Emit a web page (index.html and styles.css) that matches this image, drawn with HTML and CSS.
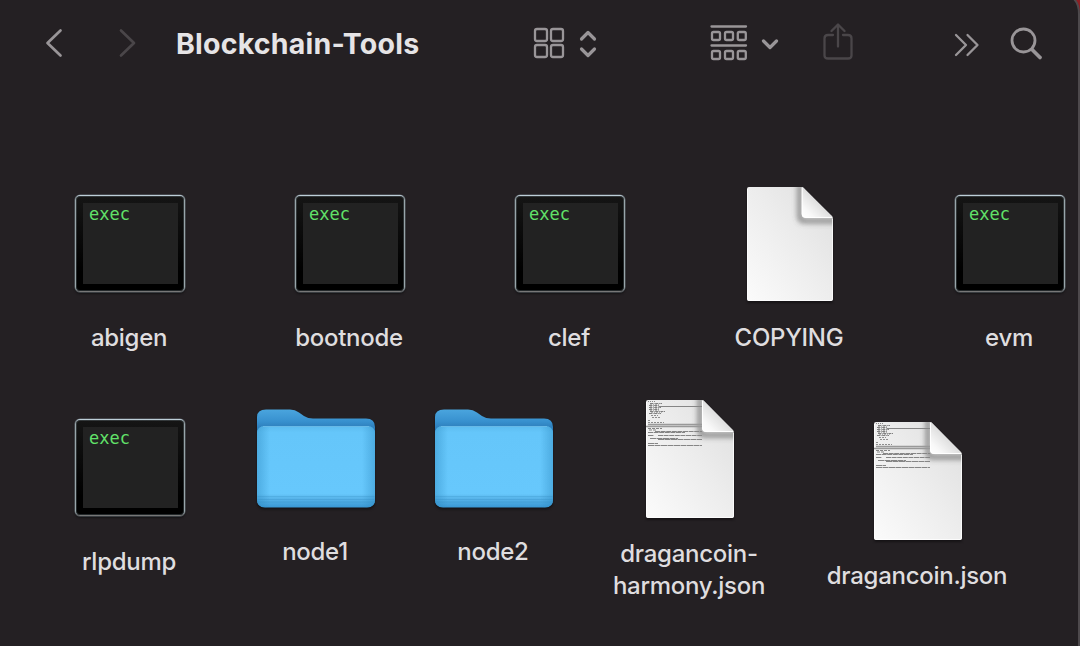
FILE: index.html
```html
<!DOCTYPE html>
<html lang="en">
<head>
<meta charset="utf-8">
<title>Blockchain-Tools</title>
<link rel="stylesheet" href="styles.css">
</head>
<body>
<svg class="defs" width="0" height="0" aria-hidden="true">
  <defs>
    <linearGradient id="paper" x1="1" y1="0" x2="0" y2="1"><stop offset="0" stop-color="#dedede"/><stop offset=".45" stop-color="#ececec"/><stop offset="1" stop-color="#fbfbfb"/></linearGradient>
    <linearGradient id="fold" x1="1" y1="0" x2="0" y2="1"><stop offset=".45" stop-color="#dcdcdc"/><stop offset=".8" stop-color="#f8f8f8"/><stop offset="1" stop-color="#fff"/></linearGradient>
    <linearGradient id="back" x1="0" y1="0" x2="0" y2="1"><stop offset="0" stop-color="#4aa5de"/><stop offset=".12" stop-color="#3891cf"/><stop offset=".2" stop-color="#2b7bb8"/><stop offset="1" stop-color="#2f87c5"/></linearGradient>
    <linearGradient id="front" x1="0" y1="0" x2="0" y2="1"><stop offset="0" stop-color="#5cbcef"/><stop offset=".08" stop-color="#65c6fa"/><stop offset=".83" stop-color="#67c8fc"/><stop offset=".88" stop-color="#5ab7ec"/><stop offset="1" stop-color="#3998d4"/></linearGradient>
    <linearGradient id="side"><stop offset="0" stop-color="#2a86bd" stop-opacity=".42"/><stop offset=".11" stop-color="#2a86bd" stop-opacity="0"/><stop offset=".89" stop-color="#2a86bd" stop-opacity="0"/><stop offset="1" stop-color="#2a86bd" stop-opacity=".42"/></linearGradient>
    <filter id="soft" x="-50%" y="-50%" width="200%" height="200%"><feGaussianBlur stdDeviation="2.5"/></filter>
    <clipPath id="sheet"><path d="M2 0H57L88 32V116Q88 118 86 118H2Q0 118 0 116V2Q0 0 2 0Z"/></clipPath>
    <symbol id="document" viewBox="0 0 88 118">
      <path d="M2 0H57L88 32V116Q88 118 86 118H2Q0 118 0 116V2Q0 0 2 0Z" fill="url(#paper)"/>
      <g clip-path="url(#sheet)"><path d="M54 -4V30Q54 35 59 35H92" fill="none" stroke="#555" stroke-opacity=".55" stroke-width="6" filter="url(#soft)"/></g>
      <path d="M56 0Q57 0 58 1L87 30Q88 31 87.500 32H60Q56 32 56 28Z" fill="url(#fold)"/>
      <path d="M56.500 1V28Q56.500 31.500 60 31.500H87" fill="none" stroke="#fff"/>
      <path d="M.5 2V116Q.5 117.500 2 117.500H86Q87.500 117.500 87.500 116V33" fill="none" stroke="#fff" stroke-opacity=".75"/>
    </symbol>
    <symbol id="json" viewBox="0 0 88 118">
      <use href="#document" width="88" height="118"/>
      <g fill="none" stroke="#555" stroke-width="1">
        <path d="M2 1.500H9" stroke-dasharray="1 1" stroke="#888"/>
        <path d="M4 3.500H16M3 5.500H13M3 7.500H15M3 9.500H13M4 11.500H19M3 13.500H15" stroke-dasharray="3 .6 1 .6" stroke="#808080"/>
        <path d="M4 4.500H13M4 6.500H13M4 8.500H13M4 10.500H13M5 12.500H16" stroke-dasharray="2 1 1 1" stroke="#b4b4b4"/>
        <path d="M5 15.500H12M6 17.500H14M2 20.500H5M2 22.500H18" stroke-dasharray="2 1" stroke="#8d8d8d"/>
        <path d="M13 6.500H56" stroke="#858585"/>
        <path d="M2 24.500H56M0 26.500H56" stroke="#999" stroke-width="1.500"/>
        <path d="M2 28.500H16M3 30H11" stroke-dasharray="3 1" stroke="#858585"/>
        <path d="M2 32.500H39M9 31.500H56M2 35.500H8M12 35.500H56" stroke-dasharray="5 .6" stroke="#858585"/>
        <path d="M4 38.500H32M12 39.500H56M2 43.500H12M2 45.500H56" stroke-dasharray="6 .5" stroke="#858585"/>
      </g>
    </symbol>
    <symbol id="folder" viewBox="0 0 118 99">
      <path d="M0 8Q0 .5 9 .5H33Q38 .5 42 3.500L47 7Q51 9.500 56 9.500H109Q118 9.500 118 18V90Q118 98 110 98H8Q0 98 0 90Z" fill="url(#back)"/>
      <path d="M0 25Q0 17 8 17H110Q118 17 118 25V90Q118 98.500 110 98.500H8Q0 98.500 0 90Z" fill="url(#front)"/>
      <path d="M0 25Q0 17 8 17H110Q118 17 118 25V90Q118 98.500 110 98.500H8Q0 98.500 0 90Z" fill="url(#side)"/>
      <path d="M6 17.500H112" stroke="#67b9e7"/>
      <path d="M.5 87.500H117.500M.5 90.500H117.500M.5 93H117.500" stroke="#3189bd" stroke-opacity=".25"/>
    </symbol>
  </defs>
</svg>

<main class="window">
  <header class="toolbar">
    <svg class="icon back" width="20" height="30" viewBox="0 0 20 30"><path d="M17.500 2.500L4.500 15L17.500 27.500"/></svg>
    <svg class="icon forward dim" width="20" height="30" viewBox="0 0 20 30"><path d="M4 2.500L17 15L4 27.500"/></svg>
    <h1 class="title">Blockchain-Tools</h1>
    <svg class="icon view" width="64" height="32" viewBox="0 0 64 32"><rect x="2" y="2" width="12" height="12" rx="2"/><rect x="18" y="2" width="12" height="12" rx="2"/><rect x="2" y="18" width="12" height="12" rx="2"/><rect x="18" y="18" width="12" height="12" rx="2"/><path class="bold" d="M48.500 12L55 5.500L61.500 12M48.500 22L55 28.500L61.500 22"/></svg>
    <svg class="icon group" width="70" height="36" viewBox="0 0 70 36"><path d="M1.500 1.500H36M1.500 20.500H36"/><rect x="2" y="7" width="8" height="8" rx="1.500"/><rect x="15" y="7" width="8" height="8" rx="1.500"/><rect x="27.800" y="7" width="8" height="8" rx="1.500"/><rect x="2" y="26" width="8" height="8" rx="1.500"/><rect x="15" y="26" width="8" height="8" rx="1.500"/><rect x="27.800" y="26" width="8" height="8" rx="1.500"/><path class="bold" d="M53.500 16L60 22.500L66.500 16"/></svg>
    <svg class="icon share dim" width="32" height="40" viewBox="0 0 32 40"><path d="M12 12H7Q3.500 12 3.500 15.500V32.500Q3.500 35.500 7 35.500H27Q30.500 35.500 30.500 32.500V15.500Q30.500 12 27 12H22M17 23.500V2M10.500 8L17 1.500L23.500 8"/></svg>
    <svg class="icon more" width="26" height="24" viewBox="0 0 26 24"><path d="M2 2L12 12L2 22M13.500 2L23.500 12L13.500 22"/></svg>
    <svg class="icon search" width="34" height="34" viewBox="0 0 34 34"><circle cx="13.500" cy="13.500" r="11.500"/><path class="handle" d="M22 22.500L30 30.500"/></svg>
  </header>

  <section class="files">
    <div class="row top">
      <figure class="file"><div class="art"><div class="terminal">exec</div></div><figcaption>abigen</figcaption></figure>
      <figure class="file"><div class="art"><div class="terminal">exec</div></div><figcaption>bootnode</figcaption></figure>
      <figure class="file"><div class="art"><div class="terminal">exec</div></div><figcaption>clef</figcaption></figure>
      <figure class="file"><div class="art"><svg class="sheet" width="86" height="114" viewBox="0 0 88 118" preserveAspectRatio="none"><use href="#document" width="88" height="118"/></svg></div><figcaption>COPYING</figcaption></figure>
      <figure class="file"><div class="art"><div class="terminal">exec</div></div><figcaption>evm</figcaption></figure>
    </div>
    <div class="row bottom">
      <figure class="file rlp"><div class="art"><div class="terminal">exec</div></div><figcaption>rlpdump</figcaption></figure>
      <figure class="file node-one"><div class="art"><svg class="folder" width="118" height="99"><use href="#folder"/></svg></div><figcaption>node1</figcaption></figure>
      <figure class="file node-two"><div class="art"><svg class="folder" width="118" height="99"><use href="#folder"/></svg></div><figcaption>node2</figcaption></figure>
      <figure class="file harmony"><div class="art"><svg class="sheet" width="88" height="118"><use href="#json"/></svg></div><figcaption>dragancoin-<br>harmony.json</figcaption></figure>
      <figure class="file coin"><div class="art"><svg class="sheet" width="88" height="118"><use href="#json"/></svg></div><figcaption>dragancoin.json</figcaption></figure>
    </div>
  </section>
  <svg class="edge" width="10" height="646" viewBox="0 0 10 646"><path d="M4 0H10V14Q9 5 4 0Z" fill="#8d1f24"/><path d="M4 -1Q9 4 9 14V646" fill="none" stroke="#4d494c" stroke-width="2"/></svg>
</main>
</body>
</html>
```

FILE: styles.css
```css
* { box-sizing: border-box; }
body { margin: 0; background: #242023; font-family: Inter, "Liberation Sans", sans-serif; }
.defs { position: absolute; }
.window { position: relative; width: 1080px; height: 646px; overflow: hidden; background: #242023; color: #dfdddf; }
.toolbar { display: flex; align-items: center; height: 86px; padding-left: 43px; }
.icon { flex: none; fill: none; stroke: #999598; stroke-width: 2.3; stroke-linecap: round; stroke-linejoin: round; }
.icon .bold { stroke-width: 3.2; }
.icon .handle { stroke-width: 3.8; }
.back, .forward { stroke-width: 2.7; }
.dim { stroke: #4a4649; }
.forward { margin-left: 54px; }
.title { flex: none; width: 244px; margin: 2px 0 0 39px; font-size: 28.5px; font-weight: 700; line-height: 36px; letter-spacing: .22px; white-space: nowrap; color: #e6e4e6; }
.view { margin-left: 113px; }
.group { margin-left: 113px; }
.share { margin-left: 41px; }
.more { margin: 4px 0 0 101px; stroke-width: 2.3; }
.search { margin: 2px 0 0 30px; stroke-width: 2.8; }
.files { padding-top: 98px; }
.row { display: flex; align-items: flex-start; }
.top { padding-left: 20px; height: 216px; }
.file { flex: none; width: 220px; margin: 0; text-align: center; }
.art { display: flex; justify-content: center; align-items: center; height: 120px; }
.file figcaption { margin: 18px 2px 0 0; font-size: 24px; font-weight: 500; line-height: 32px; letter-spacing: -.28px; white-space: nowrap; }
.terminal { width: 110px; height: 97px; margin-bottom: 1px; padding: 8px 0 0 13px; border: 1px solid; border-color: #bdced8 #98a5aa #777; border-radius: 5px; background: linear-gradient(#222, #222) 6.5px 7px / 95px 81px no-repeat, linear-gradient(#151515, #000 80%); box-shadow: inset 0 0 0 1px rgba(165, 185, 195, .22), 0 0 0 .5px rgba(165, 185, 195, .5), 0 2px 2px #151315; font: 17px/20px "DejaVu Sans Mono", monospace; text-align: left; color: #61e169; }
.sheet, .folder { display: block; filter: drop-shadow(0 2px 1px #151315); }
.bottom .file { width: 170px; }
.bottom .rlp { margin: 8px 0 0 45px; }
.bottom .node-one { margin: -2px 0 0 16px; }
.bottom .node-two { margin: -2px 0 0 8px; }
.bottom .harmony { margin: -1px 0 0 26px; }
.bottom .harmony figcaption, .bottom .coin figcaption { margin-top: 19px; }
.bottom .coin { width: 190px; margin: 21px 0 0 48px; }
.edge { position: absolute; top: 0; right: 0; }
```
